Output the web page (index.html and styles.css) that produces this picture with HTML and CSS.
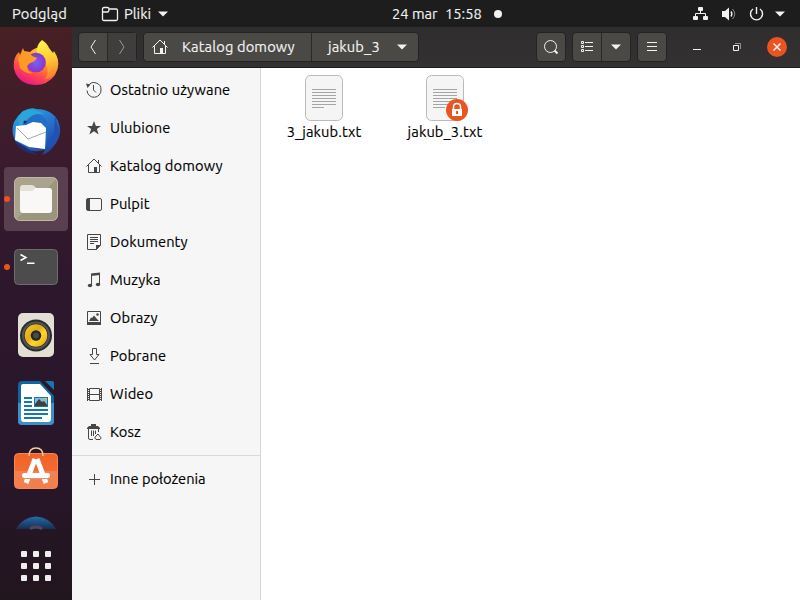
FILE: index.html
```html
<!DOCTYPE html>
<html lang="pl">
<head>
<meta charset="utf-8">
<title>Pliki</title>
<link rel="stylesheet" href="styles.css">
</head>
<body>
<div class="desktop">
<header class="topbar">
  <span class="activities">Podgląd</span>
  <div class="app-menu">
    <svg class="folder" width="18" height="16" viewBox="0 0 18 16"><path d="M1.5 12.5V3Q1.5 1.5 3 1.5H6.5Q8 1.5 8 3H15Q16.500 3 16.500 4.500V13Q16.500 14.500 15 14.500H3Q1.500 14.500 1.500 13V6H6.500Q8 6 8 3"/></svg>
    <span class="app-name">Pliki</span>
    <svg class="caret" width="10" height="6"><path d="M0 .5H10L5 5.500Z"/></svg>
  </div>
  <div class="clock"><span class="date">24 mar</span><span class="time">15:58</span><i class="notice"></i></div>
  <div class="status">
    <svg width="16" height="16" viewBox="0 0 16 16"><rect class="fill" x="6" y="1" width="5" height="4" rx="1"/><rect class="fill" x="1" y="10" width="5" height="4" rx="1"/><rect class="fill" x="11" y="10" width="5" height="4" rx="1"/><path class="line" d="M8.500 5V7.500M3.500 10V7.500H13.500V10"/></svg>
    <svg width="16" height="16" viewBox="0 0 16 16"><path class="fill" d="M2 5H5L9 1.500V14.500L5 11H2Z"/><path class="line thicker" d="M11 5.500Q12.700 8 11 10.500"/><path class="line dim" d="M12.500 3Q17 8 12.500 13"/></svg>
    <svg width="16" height="16" viewBox="0 0 16 16"><path class="line thicker" d="M8.500 1V8M5 3A6 6 0 1 0 12 3"/></svg>
    <svg class="caret" width="10" height="6"><path d="M0 .5H10L5 5.500Z"/></svg>
  </div>
</header>
<div class="workspace">
<nav class="dock">
  <div class="launcher"><svg width="48" height="48" viewBox="0 0 48 48">
    <defs>
      <linearGradient id="fox" x1=".85" y1=".1" x2=".3" y2="1"><stop offset="0" stop-color="#ffd63a"/><stop offset=".4" stop-color="#ff8b28"/><stop offset=".7" stop-color="#ff4550"/><stop offset="1" stop-color="#e8148c"/></linearGradient>
      <linearGradient id="flame" x1=".5" y1="0" x2=".7" y2="1"><stop offset="0" stop-color="#fff44a"/><stop offset=".5" stop-color="#ffc832"/><stop offset="1" stop-color="#ff792f"/></linearGradient>
      <radialGradient id="globe"><stop offset="0" stop-color="#7860ff"/><stop offset="1" stop-color="#8a35c5"/></radialGradient>
    </defs>
    <path fill="url(#fox)" d="M11 9L12 12L18 13Q24 7 31 9L44 16Q49 26 43 36Q36 46 23 46Q6 45 2 30Q.5 19 7 13L8 16Z"/>
    <path fill="url(#flame)" d="M30 1Q35 4 37 9L41 14L42 12Q47 20 46 27Q43 39 33 40Q38 34 34 25Q32 19 25 14Q24 6 30 1Z"/>
    <circle cx="24" cy="23.500" r="9.800" fill="url(#globe)"/>
    <path fill="#ff9b25" d="M6 19Q10 13 18 14L20 17L25 19Q23 23 18 24L15 27Q15 33 21 34Q14 36 8 29Z"/>
  </svg></div>
  <div class="launcher"><svg width="50" height="50" viewBox="0 0 50 50">
    <defs><linearGradient id="bird" x1=".2" y1="0" x2=".8" y2="1"><stop offset="0" stop-color="#2aa7dd"/><stop offset=".45" stop-color="#2674d0"/><stop offset="1" stop-color="#213f94"/></linearGradient></defs>
    <path fill="url(#bird)" d="M12 5Q20 1 25 3Q41 3 47 15Q52 27 45 37Q40 46 31 49L34 44Q18 48 6 38Q-1 27 3 16Q7 9 12 5Z"/>
    <path fill="#236ec7" d="M9 14Q16 3 30 9Q38 14 37 25L34 44L33 23Q29 15 21 16L13 20Z"/><path fill="#2ba6da" d="M11 6Q22 1 33 8Q22 6 15 15L9 20L7 13Z"/>
    <path fill="#202f70" d="M3 34Q16 42 22 46L27 49Q9 47 3 34Z"/>
    <path fill="#fff" d="M5 20L15 19L22 16L30 17L35 22L34 43L18 41L4 34Z"/><path fill="none" stroke="#a5a5af" d="M6 22L17 33L35 26"/><circle cx="14" cy="16" r="1.500" fill="#252346"/>
    <path fill="#2251b4" d="M44 10L43 27L38 34L37 43L45 37L48 25Z"/>
  </svg></div>
  <div class="launcher active running"><svg width="44" height="44" viewBox="0 0 44 44"><defs><linearGradient id="sand" x2="1" y2="1"><stop stop-color="#aaa28c"/><stop offset=".5" stop-color="#aaa38d"/><stop offset=".5" stop-color="#9d967f"/><stop offset="1" stop-color="#9a937d"/></linearGradient></defs><rect x=".5" y=".5" width="43" height="43" rx="5" fill="url(#sand)" stroke="#c0b8a4"/><path fill="#e5e1d7" d="M6 11Q6 8 9 8H18Q20 8 22 11H34Q38 11 38 15V32H6Z"/><path fill="#f9f8f6" d="M6 14H18Q20 14 21 11H35Q38 11 38 14V33Q38 36 35 36H9Q6 36 6 33Z"/></svg></div>
  <div class="launcher running"><svg width="44" height="36" viewBox="0 0 44 36"><rect x=".5" y=".5" width="43" height="35" rx="4" fill="#4c4c4c" stroke="#6d6d6d"/><path fill="none" stroke="#fff" stroke-width="1.500" d="M6.500 5.500L12 8.500L6.500 11.500M13 14.300H20.500"/></svg></div>
  <div class="launcher"><svg width="36" height="44" viewBox="0 0 36 44"><defs><linearGradient id="cone" x2="1" y2="1"><stop stop-color="#f8ca28"/><stop offset=".4" stop-color="#e0ac18"/><stop offset=".6" stop-color="#ffd52c"/><stop offset="1" stop-color="#dca514"/></linearGradient></defs><rect width="36" height="44" rx="5" fill="#e4dfd4"/><circle cx="18" cy="22.500" r="16" fill="#292b30"/><circle cx="18" cy="22.500" r="13" fill="none" stroke="#535554" stroke-width="2"/><circle cx="18" cy="22.500" r="11.300" fill="url(#cone)"/><circle cx="18" cy="22.500" r="5.200" fill="#242628"/><circle cx="18" cy="22.500" r="3" fill="#484a4d"/></svg></div>
  <div class="launcher"><svg width="36" height="44" viewBox="0 0 36 44"><path fill="#0f65a0" d="M4 0H22L36 15V40Q36 44 32 44H4Q0 44 0 40V4Q0 0 4 0Z"/><path fill="#3f91c4" d="M0 22H36V40Q36 44 32 44H4Q0 44 0 40Z"/><path fill="#fff" d="M5 3H22L33 15V38Q33 41 30 41H6Q3 41 3 38V5Q3 3 5 3Z"/><path fill="#1777ae" d="M27 0H34Q36 0 36 2V9Z"/><path stroke="#1777ae" stroke-width="2" d="M6 17H14M6 21H14M6 25H14M6 29H30M6 33H30M6 37H24"/><rect x="16" y="16" width="14" height="10" fill="#1777ae"/><path fill="#82bbdd" d="M17 17H29V25H17Z"/><path fill="#40413c" d="M17 25V23L21 18L24 21L26 20L29 24V25Z"/><path fill="#f3bd2c" d="M26 17H29V20Z"/></svg></div>
  <div class="launcher store"><svg width="46" height="44" viewBox="0 0 46 44"><defs><linearGradient id="bag" x2="0" y2="1"><stop stop-color="#f16325"/><stop offset=".5" stop-color="#f26b34"/><stop offset=".5" stop-color="#f3814f"/><stop offset="1" stop-color="#f17e4c"/></linearGradient></defs><rect x="1.500" y="7.500" width="43" height="35" rx="4" fill="url(#bag)" stroke="#ff8452"/><path fill="none" stroke="#f3d1a1" stroke-width="1.500" d="M16 10Q16 2 23 2Q30 2 30 10"/><path fill="none" stroke="#fff" stroke-width="5" d="M13 37L22 13M24 13L33 37"/><rect x="9" y="27" width="28" height="5" rx="2.500" fill="#fff"/><path stroke="#e98f72" d="M11 32.500H35"/></svg></div>
  <div class="partial"><svg width="40" height="14" viewBox="0 0 40 14"><defs><linearGradient id="help" x2="0" y2="1"><stop stop-color="#246cab"/><stop offset="1" stop-color="#172d4f"/></linearGradient></defs><path fill="url(#help)" d="M0 13Q7 1 20 .500Q33 1 40 13Z"/><path fill="none" stroke="#4c475c" stroke-width="3" d="M14 13Q16 11 20 11Q24 11 26 13"/></svg></div>
  <div class="apps-grid"><i></i><i></i><i></i><i></i><i></i><i></i><i></i><i></i><i></i></div>
</nav>
<main class="window">
  <header class="headerbar">
    <div class="group history"><button><svg width="8" height="16"><path class="line" d="M6.500 1L2 8L6.500 15"/></svg></button><button class="disabled"><svg width="8" height="16"><path class="line" d="M1.500 1L6 8L1.500 15"/></svg></button></div>
    <div class="group path">
      <button class="crumb home"><svg width="16" height="16" viewBox="0 0 16 16"><path class="line" d="M.5 8.500L8 1L15.500 8.500M2.500 7V14.500H13.500V7M12.500 2V5"/><path class="fill" d="M8 9h3v5h-3z"/></svg><span class="crumb-home">Katalog domowy</span></button>
      <button class="crumb current"><span class="crumb-name">jakub_3</span><svg class="caret" width="10" height="6"><path d="M0 .5H10L5 5.500Z"/></svg></button>
    </div>
    <div class="group search"><button><svg width="16" height="16" viewBox="0 0 16 16"><circle class="line" cx="7.500" cy="7.500" r="6"/><path class="line thick" d="M11.500 11.500L14.500 14.500"/></svg></button></div>
    <div class="group view"><button><svg width="14" height="12" viewBox="0 0 14 12"><path class="line" d="M1.500.500h2v2h-2zM1.500 4.500h2v2h-2zM1.500 8.500h2v2h-2zM5 1.500H13M5 5.500H13M5 9.500H13"/></svg></button><button><svg class="caret" width="10" height="6"><path d="M0 .5H10L5 5.500Z"/></svg></button></div>
    <div class="group menu"><button><svg width="10" height="10"><path class="line" d="M0 .5H10M0 4.500H10M0 8.500H10"/></svg></button></div>
    <div class="controls">
      <svg width="8" height="8"><path class="line" d="M0 6.500H8"/></svg>
      <svg width="8" height="8"><path class="line" d="M.5 2.500h5v5h-5z"/><path class="line dim" d="M2 .5H7.500V6"/></svg>
      <button class="close"><svg width="8" height="8"><path class="line" d="M.5.500L7.500 7.500M7.500.500L.5 7.500"/></svg></button>
    </div>
  </header>
  <div class="body">
    <aside class="sidebar">
      <a class="place"><svg width="16" height="16" viewBox="0 0 16 16"><path class="line" d="M2.200 3.700A7 7 0 0 1 15 8A7 7 0 0 1 1 8.500"/><path class="line" d="M7.500 3V8L10 10.500"/><path class="fill" d="M0 1.500L4.500 2.500L1.500 6Z"/></svg><span>Ostatnio używane</span></a>
      <a class="place"><svg width="16" height="16" viewBox="0 0 16 16"><path class="fill" d="M8 1L9.900 6H15L10.900 9L12.600 14.500L8 11.200L3.400 14.500L5.100 9L1 6H6.100Z"/></svg><span>Ulubione</span></a>
      <a class="place"><svg width="16" height="16" viewBox="0 0 16 16"><path class="line" d="M.5 8.500L8 1L15.500 8.500M2.500 7V14.500H13.500V7M12.500 2V5"/><path class="fill" d="M8 9h3v5h-3z"/></svg><span>Katalog domowy</span></a>
      <a class="place"><svg width="16" height="16" viewBox="0 0 16 16"><rect class="line" x=".5" y="2.500" width="15" height="12" rx="1.500"/><path class="fill" d="M1 3h3v11h-3z"/></svg><span>Pulpit</span></a>
      <a class="place"><svg width="16" height="16" viewBox="0 0 16 16"><path class="line" d="M1.500.500H14.500V11L10.500 15.500H1.500ZM4 3.500H12M4 5.500H12M4 7.500H12M4 9.500H8"/><path class="fill" d="M10 11H15L10 16Z"/></svg><span>Dokumenty</span></a>
      <a class="place"><svg width="16" height="16" viewBox="0 0 16 16"><path class="line" d="M5.500 13V2.500L13.500 1.500V12"/><path class="fill" d="M5 1.500L14 .500V3L5 4Z"/><ellipse class="fill" cx="4" cy="13.500" rx="2.200" ry="1.800"/><ellipse class="fill" cx="12" cy="12.500" rx="2.200" ry="1.800"/></svg><span>Muzyka</span></a>
      <a class="place"><svg width="16" height="16" viewBox="0 0 16 16"><path class="line" d="M1.500 1.500H14.500V14H1.500Z"/><path class="fill" d="M1 12h14v3h-14zM3 11L5 7.500L6 8L8 5.500L11 9L13 11Z"/><circle class="fill" cx="11.500" cy="4.500" r="1.300"/></svg><span>Obrazy</span></a>
      <a class="place"><svg width="16" height="16" viewBox="0 0 16 16"><path class="line" d="M6.500.500H10.500V6.500H13L8.500 12L4 6.500H6.500ZM4 15.500H13"/></svg><span>Pobrane</span></a>
      <a class="place"><svg width="16" height="16" viewBox="0 0 16 16"><path class="line" d="M3.500 2.500H13.500V14.500H3.500ZM3.500 8.500H13.500M1.500 2V15M15.500 2V15"/><path class="film" d="M2.500 3V15M14.500 3V15"/></svg><span>Wideo</span></a>
      <a class="place"><svg width="16" height="16" viewBox="0 0 16 16"><path class="fill" d="M5 0H10V2H12L14 4V5H1V4L3 2H5Z"/><path class="line" d="M2.500 5V14Q2.500 15.500 4 15.500H7M12.500 5V8M5.500 6.500V12M7.500 6.500V12M9.500 6.500V10M10 12L12 10L13.500 12Q16.500 14 14 15.500H10Q7.500 14 10 12Z"/></svg><span>Kosz</span></a>
      <hr>
      <a class="place other"><svg width="16" height="16" viewBox="0 0 16 16"><path class="line" d="M8.500 3V14M3 8.500H14"/></svg><span>Inne położenia</span></a>
    </aside>
    <section class="files">
      <div class="file"><div class="thumb"><svg width="38" height="46" viewBox="0 0 38 46"><rect x=".5" y=".5" width="37" height="45" rx="5" fill="#f5f5f5" stroke="#bababa"/><path stroke="#a5a5a5" d="M7 14.500H31M7 17.500H31M7 20.500H31M7 23.500H31M7 26.500H31M7 29.500H31M7 32.500H19"/></svg></div><span>3_jakub.txt</span></div>
      <div class="file"><div class="thumb"><svg width="38" height="46" viewBox="0 0 38 46"><rect x=".5" y=".5" width="37" height="45" rx="5" fill="#f5f5f5" stroke="#bababa"/><path stroke="#a5a5a5" d="M7 14.500H31M7 17.500H31M7 20.500H31M7 23.500H31M7 26.500H31M7 29.500H31M7 32.500H19"/></svg><svg class="lock" width="22" height="22" viewBox="0 0 22 22"><circle cx="11" cy="11" r="11" fill="#e95420"/><path fill="none" stroke="#fff" stroke-width="1.500" d="M7.500 10V8Q7.500 4.500 11 4.500Q14.500 4.500 14.500 8V10"/><path fill="#fff" d="M6 10h10v7h-10z"/><path fill="#e95420" d="M10 12h2v3h-2z"/></svg></div><span>jakub_3.txt</span></div>
    </section>
  </div>
</main>
</div>
</div>
</body>
</html>
```
FILE: styles.css
```css
* { box-sizing: border-box; }
body { margin: 0; font: 14.667px/20px Ubuntu, "Noto Sans", sans-serif; color: #000; -webkit-text-stroke: .15px currentColor; }
button { border: 0; padding: 0; margin: 0; font: inherit; letter-spacing: inherit; color: inherit; background: none; display: flex; align-items: center; justify-content: center; }
svg { display: block; flex: none; }
span { white-space: nowrap; }
.desktop { width: 800px; height: 600px; overflow: hidden; display: flex; flex-direction: column; }
.line { fill: none; stroke: currentColor; }
.fill, .caret { fill: currentColor; }
.thick { stroke-width: 2; }
.thicker { stroke-width: 1.4; }
.dim { opacity: .5; }
.film { fill: none; stroke: currentColor; stroke-dasharray: 1 1; }

.topbar { height: 27px; flex: none; background: #1d1d1d; color: #f2f2f2; display: grid; grid-template-columns: 101px 291px 300px 108px; align-items: center; }
.activities { padding-left: 12px; letter-spacing: .1px; }
.app-menu { display: flex; align-items: center; }
.folder { fill: none; stroke: currentColor; stroke-width: 1.3; }
.app-name { margin: 0 4px 0 5px; width: 30px; }
.clock { display: flex; align-items: center; }
.date { width: 53px; }
.time { width: 36px; }
.notice { width: 8px; height: 8px; border-radius: 50%; background: #f2f2f2; margin-left: 13px; }
.status { display: flex; align-items: center; gap: 12px; }
.status .caret { margin-left: -1px; }

.workspace { display: flex; flex: 1; min-height: 0; }
.dock { width: 72px; flex: none; display: flex; flex-direction: column; align-items: center; padding-top: 4px; background: linear-gradient(175deg, #482024 0%, #3a1b2d 24%, #2d172d 45%, #28162a 78%, #21151d 100%); }
.launcher { width: 64px; height: 64px; margin-bottom: 4px; flex: none; display: flex; align-items: center; justify-content: center; border-radius: 4px; position: relative; }
.active { background: #5a3f51; }
.running::before { content: ""; width: 6px; height: 6px; border-radius: 50%; background: #e95420; position: absolute; left: 0; top: 29px; }
.store { align-items: flex-start; padding-top: 7px; }
.partial { height: 14px; margin-top: 9px; flex: none; }
.apps-grid { display: grid; grid-template-columns: repeat(3, 6px); grid-auto-rows: 6px; gap: 6px; margin-top: 21px; }
.apps-grid i { background: #eeeeec; border-radius: 1px; }

.window { flex: 1; min-width: 0; display: flex; flex-direction: column; background: #fff; }
.headerbar { height: 41px; flex: none; background: linear-gradient(#2f2d2e, #343132); border-bottom: 1px solid #1c1b1b; color: #f2f2f2; display: flex; align-items: center; padding-left: 6px; }
.group { display: flex; height: 30px; border: 1px solid #242223; border-radius: 4px; background: #4b4946; flex: none; }
.group button { flex: 1; }
.group button + button { border-left: 1px solid #2a2829; }
.history { width: 59px; }
.disabled { background: #403d3d; }
.history .disabled svg { opacity: .5; }
.path { width: 276px; margin-left: 6px; letter-spacing: .13px; }
.path .crumb { flex: none; justify-content: flex-start; }
.path .home { width: 167px; padding-left: 8px; }
.crumb-home { margin-left: 14px; }
.path .current { flex: 1; padding-left: 16px; }
.crumb-name { width: 69px; text-align: left; }
.search { width: 30px; margin-left: 117px; }
.view { width: 59px; margin-left: 6px; }
.menu { width: 30px; margin-left: 6px; }
.controls { display: flex; align-items: center; margin-left: 26px; }
.controls svg + svg { margin-left: 32px; }
.close { width: 20px; height: 20px; border-radius: 50%; background: #e95420; margin-left: 26px; }
.close .line { stroke-width: 1.5; }

.body { flex: 1; display: flex; min-height: 0; }
.sidebar { width: 189px; flex: none; background: #f6f6f6; border-right: 1px solid #d4d4d4; padding-top: 3px; letter-spacing: .12px; }
.place { height: 38px; display: flex; align-items: center; padding-left: 14px; gap: 8px; }
.other { letter-spacing: 0; }
.place svg { color: #464646; }
hr { margin: 4px 0; border: 0; border-top: 1px solid #d9d9d9; }
.files { display: flex; padding: 7px 0 0 2px; letter-spacing: .1px; }
.file { width: 121px; display: flex; flex-direction: column; align-items: center; }
.thumb { position: relative; }
.lock { position: absolute; left: 20px; top: 24px; }
.file span { padding: 1px 0 0 1px; }
```
